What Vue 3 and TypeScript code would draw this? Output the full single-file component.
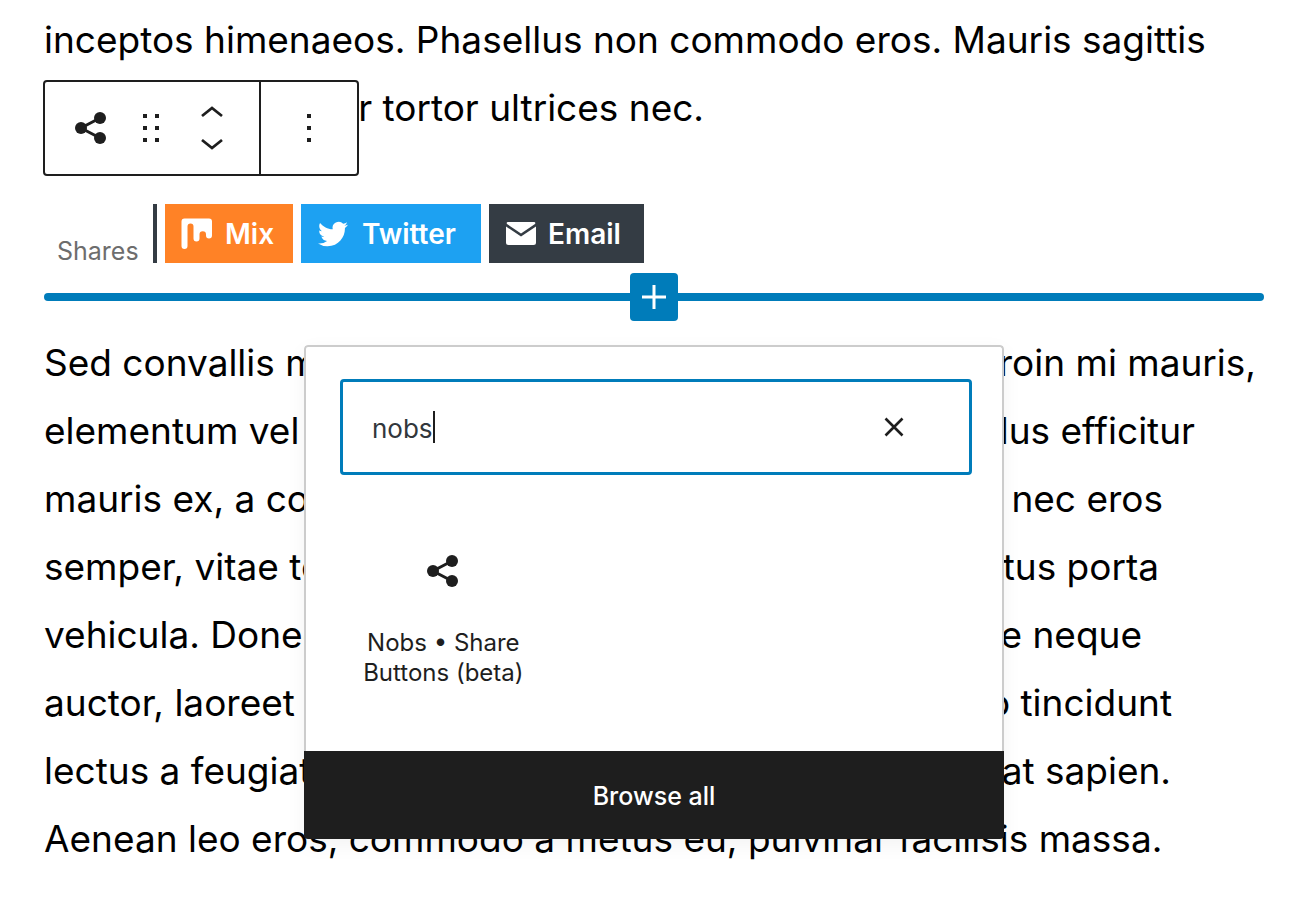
<script setup lang="ts">
import { ref } from 'vue'

interface Line {
  start: string
  end: string
  inset: number
}

const query = ref('nobs')

// inset: ragged right margin of each line, in pixels
const intro: Line[] = [
  { start: 'inceptos himenaeos. Phasellus non commodo eros. Mauris sagittis', end: '', inset: 0 },
  { start: '', end: 'pulvinar tortor ultrices nec.', inset: 560 },
]

const body: Line[] = [
  { start: 'Sed convallis mi', end: 'Proin mi mauris,', inset: 8 },
  { start: 'elementum vel', end: 'Phasellus efficitur', inset: 69 },
  { start: 'mauris ex, a con', end: 'nec eros', inset: 101 },
  { start: 'semper, vitae te', end: 'lectus porta', inset: 105 },
  { start: 'vehicula. Donec', end: 'ante neque', inset: 122 },
  { start: 'auctor, laoreet', end: 'leo tincidunt', inset: 92 },
  { start: 'lectus a feugiat', end: 'erat sapien.', inset: 93 },
  { start: 'Aenean leo eros, commodo a metus eu, pulvinar facilisis massa.', end: '', inset: 0 },
]
</script>

<template>
  <main class="editor">
    <p class="copy">
      <span v-for="(line, i) in intro" :key="i" class="line" :style="{ paddingRight: line.inset + 'px' }">
        <span>{{ line.start }}</span>
        <span>{{ line.end }}</span>
      </span>
    </p>

    <div class="toolbar" role="toolbar" aria-label="Block tools">
      <div class="group">
        <button type="button" class="tool" aria-label="Share Buttons">
          <svg class="share" viewBox="0 0 32 32" aria-hidden="true">
            <path d="M25 6 6 16l19 10" fill="none" stroke="currentColor" stroke-width="3" />
            <circle cx="6" cy="16" r="6" /><circle cx="25" cy="6" r="6" /><circle cx="25" cy="26" r="6" />
          </svg>
        </button>
        <button type="button" class="tool" aria-label="Drag">
          <svg width="16" height="28" viewBox="0 0 16 28" aria-hidden="true">
            <path d="M0 0h4v4H0zM12 0h4v4h-4zM0 12h4v4H0zM12 12h4v4h-4zM0 24h4v4H0zM12 24h4v4h-4z" />
          </svg>
        </button>
        <div class="movers">
          <button type="button" class="mover" aria-label="Move up">
            <svg width="22" height="12" viewBox="0 0 22 12" aria-hidden="true">
              <path d="M1 10 11 2l10 8" fill="none" stroke="currentColor" stroke-width="2.8" />
            </svg>
          </button>
          <button type="button" class="mover" aria-label="Move down">
            <svg width="22" height="12" viewBox="0 0 22 12" aria-hidden="true">
              <path d="m1 2 10 8 10-8" fill="none" stroke="currentColor" stroke-width="2.8" />
            </svg>
          </button>
        </div>
      </div>
      <div class="group options">
        <button type="button" class="tool" aria-label="Options">
          <svg width="4" height="28" viewBox="0 0 4 28" aria-hidden="true">
            <path d="M0 0h4v4H0zM0 12h4v4H0zM0 24h4v4H0z" />
          </svg>
        </button>
      </div>
    </div>

    <section class="shares" aria-label="Share buttons">
      <span class="total">Shares</span>
      <a href="#mix" class="network mix">
        <svg width="32" height="32" viewBox="0 0 32 32" aria-hidden="true">
          <path d="M3.500 .5H28Q31 .5 31 3.500V17.500a3 3 0 0 1-6 0V16.500a3 3 0 0 0-6.500 0V20.500a3 3 0 0 1-6 0V8.500a3 3 0 0 0-6 0V28a3 3 0 0 1-6 0V3.500Q.5 .5 3.500 .5z" />
        </svg>
        <span>Mix</span>
      </a>
      <a href="#twitter" class="network twitter">
        <svg width="30" height="30" viewBox="0 0 24 24" aria-hidden="true">
          <path d="M23.953 4.57a10 10 0 01-2.825.775 4.958 4.958 0 002.163-2.723c-.951.555-2.005.959-3.127 1.184a4.92 4.92 0 00-8.384 4.482C7.69 8.095 4.067 6.13 1.64 3.162a4.822 4.822 0 00-.666 2.475c0 1.71.87 3.213 2.188 4.096a4.904 4.904 0 01-2.228-.616v.06a4.923 4.923 0 003.946 4.827 4.996 4.996 0 01-2.212.085 4.936 4.936 0 004.604 3.417 9.867 9.867 0 01-6.102 2.105c-.39 0-.779-.023-1.17-.067a13.995 13.995 0 007.557 2.209c9.053 0 13.998-7.496 13.998-13.985 0-.21 0-.42-.015-.63A9.935 9.935 0 0024 4.59z" />
        </svg>
        <span>Twitter</span>
      </a>
      <a href="#email" class="network email">
        <svg width="30" height="24" viewBox="0 0 30 24" aria-hidden="true">
          <path d="M2 0h26q2 0 1 2L15 11.500 1 2Q0 0 2 0z" />
          <path d="M0 4.500 15 14.500 30 4.500V20.500q0 2.500-2.500 2.500h-25Q0 23 0 20.500z" />
        </svg>
        <span>Email</span>
      </a>
    </section>

    <div class="inserter">
      <button type="button" class="add" aria-label="Add block">
        <svg width="24" height="24" viewBox="0 0 24 24" aria-hidden="true">
          <path d="M12 0v24M0 12h24" stroke="currentColor" stroke-width="3" />
        </svg>
      </button>

      <div class="popover" role="dialog" aria-label="Add a block">
        <div class="panel">
          <div class="search">
            <input v-model="query" type="text" aria-label="Search for a block" />
            <span class="caret"></span>
            <button type="button" class="clear" aria-label="Reset search">
              <svg width="20" height="20" viewBox="0 0 20 20" aria-hidden="true">
                <path d="m1.500 1.500 17 17m0-17-17 17" stroke="currentColor" stroke-width="2.600" />
              </svg>
            </button>
          </div>
          <div class="results">
            <button type="button" class="block">
              <svg class="share" viewBox="0 0 32 32" aria-hidden="true">
                <path d="M25 6 6 16l19 10" fill="none" stroke="currentColor" stroke-width="3" />
                <circle cx="6" cy="16" r="6" /><circle cx="25" cy="6" r="6" /><circle cx="25" cy="26" r="6" />
              </svg>
              <span>Nobs • Share Buttons (beta)</span>
            </button>
          </div>
        </div>
        <button type="button" class="browse">Browse all</button>
      </div>
    </div>

    <p class="copy">
      <span v-for="(line, i) in body" :key="i" class="line" :style="{ paddingRight: line.inset + 'px' }">
        <span>{{ line.start }}</span>
        <span>{{ line.end }}</span>
      </span>
    </p>
  </main>
</template>

<style>
body {
  margin: 0;
  background: #fff;
}
</style>

<style scoped>
* {
  box-sizing: border-box;
}
.editor {
  position: relative;
  padding: 6px 50px 34px 44px;
  font-family: Inter, 'Liberation Sans', sans-serif;
  color: #1e1e1e;
}
svg {
  display: block;
  flex: none;
  fill: currentColor;
}
button {
  margin: 0;
  padding: 0;
  border: 0;
  background: none;
  color: inherit;
  font: inherit;
  cursor: pointer;
}
.copy {
  margin: 0;
  color: #000;
  font-size: 37px;
  line-height: 68px;
}
.line {
  display: flex;
  justify-content: space-between;
  white-space: nowrap;
}
.toolbar {
  position: absolute;
  top: 80px;
  left: 43px;
  display: flex;
  height: 96px;
  border: 2px solid #1e1e1e;
  border-radius: 4px;
  background: #fff;
}
.group {
  display: flex;
  padding: 0 16px;
}
.options {
  border-left: 2px solid #1e1e1e;
  padding: 0 18px;
}
.tool {
  display: flex;
  align-items: center;
  justify-content: center;
  width: 60px;
}
.movers {
  display: flex;
  flex-direction: column;
  justify-content: center;
  width: 62px;
}
.mover {
  display: flex;
  align-items: center;
  justify-content: center;
  height: 32px;
}
.share {
  width: 32px;
  height: 32px;
}
.shares {
  display: flex;
  gap: 8px;
  margin-top: 62px;
}
.total {
  display: flex;
  align-items: flex-end;
  width: 113px;
  height: 59px;
  padding-left: 13px;
  border-right: 4px solid #343c44;
  color: #6d6d6d;
  font-size: 25px;
  line-height: 24px;
}
.network {
  display: flex;
  align-items: center;
  gap: 12px;
  height: 59px;
  padding-left: 16px;
  color: #fff;
  font-size: 28px;
  font-weight: 600;
  text-decoration: none;
}
.mix {
  min-width: 128px;
  background: #ff8226;
}
.twitter {
  gap: 14px;
  min-width: 180px;
  padding-left: 17px;
  background: #1da1f2;
}
.email {
  min-width: 155px;
  padding-left: 17px;
  background: #343c44;
}
.inserter {
  position: relative;
  display: flex;
  align-items: center;
  justify-content: center;
  height: 48px;
  margin: 10px 0 8px;
}
.inserter::before {
  content: '';
  position: absolute;
  inset: 20px 0;
  border-radius: 4px;
  background: #007cba;
}
.add {
  position: relative;
  display: flex;
  align-items: center;
  justify-content: center;
  width: 48px;
  height: 48px;
  border-radius: 4px;
  background: #007cba;
  color: #fff;
}
.popover {
  position: absolute;
  z-index: 1;
  top: 72px;
  left: calc(50% - 350px);
  width: 700px;
  border-radius: 4px;
  box-shadow: 0 6px 20px rgba(0, 0, 0, 0.05);
  overflow: hidden;
}
.panel {
  padding: 32px 30px 55px 34px;
  border: 2px solid #ccc;
  border-bottom: 0;
  border-radius: 4px 4px 0 0;
  background: #fff;
}
.search {
  display: flex;
  align-items: center;
  height: 96px;
  padding: 0 65px 0 29px;
  border: 3px solid #007cba;
  border-radius: 4px;
}
.search input {
  field-sizing: content;
  min-width: 0;
  padding: 2px 0 0;
  border: 0;
  outline: 0;
  background: none;
  color: #32373c;
  font: inherit;
  font-size: 26px;
}
.caret {
  width: 2px;
  height: 32px;
  background: #1e1e1e;
}
.clear {
  margin-left: auto;
}
.results {
  display: grid;
  grid-template-columns: repeat(3, 1fr);
  margin-top: 60px;
}
.block {
  display: flex;
  flex-direction: column;
  align-items: center;
  gap: 41px;
  padding: 20px 20px 8px 16px;
  font-size: 24px;
  line-height: 30px;
}
.browse {
  display: block;
  width: 100%;
  height: 88px;
  padding-top: 2px;
  background: #1e1e1e;
  color: #fff;
  font-size: 25px;
  font-weight: 500;
}
</style>
